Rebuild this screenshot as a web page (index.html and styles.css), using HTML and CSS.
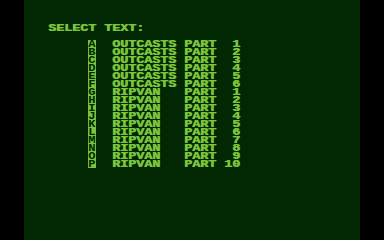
FILE: index.html
```html
<!DOCTYPE html>
<html>
<head>
<meta charset="utf-8">
<link rel="stylesheet" href="styles.css">
</head>
<body>
<div class="screen">
  <div class="title"><span class="txt">SELECT TEXT:</span></div>
  <div class="menu">
    <div class="row"><span class="key"><span class="txt">A</span></span><span class="txt">OUTCASTS PART  1</span></div>
    <div class="row"><span class="key"><span class="txt">B</span></span><span class="txt">OUTCASTS PART  2</span></div>
    <div class="row"><span class="key"><span class="txt">C</span></span><span class="txt">OUTCASTS PART  3</span></div>
    <div class="row"><span class="key"><span class="txt">D</span></span><span class="txt">OUTCASTS PART  4</span></div>
    <div class="row"><span class="key"><span class="txt">E</span></span><span class="txt">OUTCASTS PART  5</span></div>
    <div class="row"><span class="key"><span class="txt">F</span></span><span class="txt">OUTCASTS PART  6</span></div>
    <div class="row"><span class="key"><span class="txt">G</span></span><span class="txt">RIPVAN   PART  1</span></div>
    <div class="row"><span class="key"><span class="txt">H</span></span><span class="txt">RIPVAN   PART  2</span></div>
    <div class="row"><span class="key"><span class="txt">I</span></span><span class="txt">RIPVAN   PART  3</span></div>
    <div class="row"><span class="key"><span class="txt">J</span></span><span class="txt">RIPVAN   PART  4</span></div>
    <div class="row"><span class="key"><span class="txt">K</span></span><span class="txt">RIPVAN   PART  5</span></div>
    <div class="row"><span class="key"><span class="txt">L</span></span><span class="txt">RIPVAN   PART  6</span></div>
    <div class="row"><span class="key"><span class="txt">M</span></span><span class="txt">RIPVAN   PART  7</span></div>
    <div class="row"><span class="key"><span class="txt">N</span></span><span class="txt">RIPVAN   PART  8</span></div>
    <div class="row"><span class="key"><span class="txt">O</span></span><span class="txt">RIPVAN   PART  9</span></div>
    <div class="row"><span class="key"><span class="txt">P</span></span><span class="txt">RIPVAN   PART 10</span></div>
  </div>
</div>
</body>
</html>
```

FILE: styles.css
```css
html, body {
  margin: 0;
  padding: 0;
  background: #000;
}
.screen {
  width: 336px;
  height: 240px;
  margin-left: 24px;
  background: #012802;
  color: #7cc43e;
  font-family: "Liberation Mono", "DejaVu Sans Mono", monospace;
  font-weight: bold;
  font-size: 11px;
  line-height: 8px;
  padding-top: 24px;
  padding-left: 24px;
  box-sizing: border-box;
}
.txt {
  display: inline-block;
  white-space: pre;
  letter-spacing: 0;
  transform: scaleX(1.212);
  transform-origin: 0 0;
  text-shadow: 0.6px 0 0 currentColor;
}
.title {
  height: 8px;
}
.menu {
  margin-top: 8px;
  margin-left: 40px;
  display: flex;
  flex-direction: column;
}
.row {
  display: flex;
  height: 8px;
  gap: 16px;
}
.key {
  width: 8px;
  height: 8px;
  background: #7cc43e;
  color: #012802;
  flex: none;
}
.key .txt {
  text-shadow: none;
  transform: scaleX(1.1);
  transform-origin: 4px 0;
  width: 8px;
  text-align: center;
}
```
